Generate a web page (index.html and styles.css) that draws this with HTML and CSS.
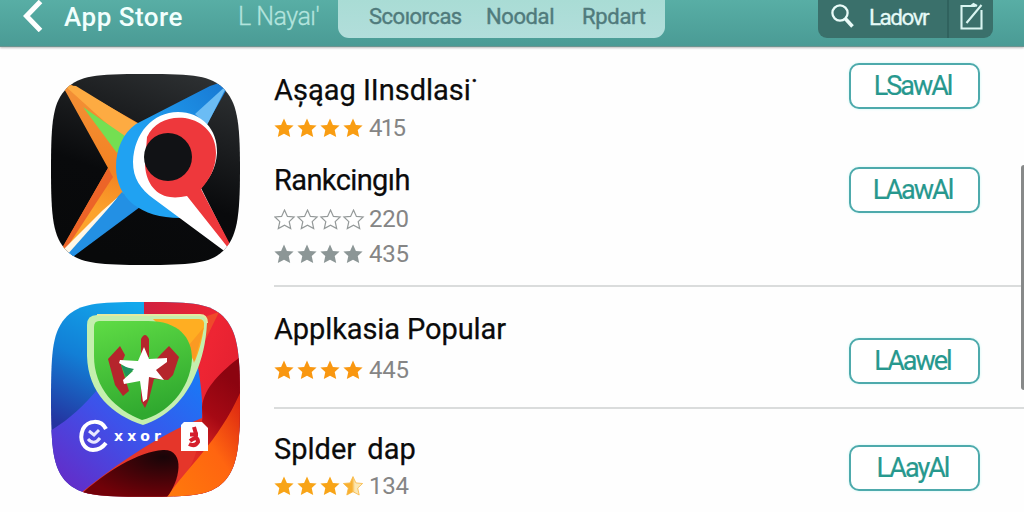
FILE: index.html
```html
<!DOCTYPE html>
<html lang="id">
<head>
<meta charset="utf-8">
<title>App Store</title>
<link rel="stylesheet" href="styles.css">
</head>
<body>
<svg class="defs" width="0" height="0" aria-hidden="true">
  <defs>
    <linearGradient id="half"><stop offset=".45" stop-color="#f8b030"/><stop offset=".6" stop-color="#fbe7b4"/></linearGradient>
    <path id="star" d="M10 .6 12.900 6.900 19.600 7.500 14.700 12.100 16.200 19 10 15.700 3.800 19 5.300 12.100 .4 7.500 7.100 6.900Z"/>
    <g id="stars"><use href="#star"/><use href="#star" x="23"/><use href="#star" x="46"/><use href="#star" x="69"/></g>
  </defs>
</svg>
<header class="bar">
  <svg class="back" width="20" height="32" viewBox="0 0 20 32"><path d="M17.500 1.500 3.500 16 17.500 30.500" fill="none" stroke="#fff" stroke-width="5"/></svg>
  <span class="brand">App Store</span>
  <span class="crumb">L Nayaı'</span>
  <nav class="tabs"><span class="tab tab-a">Scoıorcas</span><span class="tab tab-b">Noodal</span><span class="tab tab-c">Rpdart</span></nav>
  <div class="tools">
    <div class="search">
      <svg width="25" height="26" viewBox="0 0 25 26"><circle cx="10" cy="10" r="7.600" fill="none" stroke="#e9fbf8" stroke-width="2.300"/><path d="M15.200 15.500 22.500 23.500" stroke="#e9fbf8" stroke-width="3.600"/></svg>
      <span class="search-text">Ladovr</span>
    </div>
    <div class="compose"><svg width="26" height="31" viewBox="0 0 26 31"><path d="M16.500 6H2.500V28.500H22.500V10M7.500 23 22.500 5M12 6 14.500 4 18 6" fill="none" stroke="#d9f5f1" stroke-width="2.100"/></svg></div>
  </div>
</header>
<main class="store">
  <div class="icons">
    <svg class="icon" width="190" height="192" viewBox="0 0 190 192">
      <defs>
        <linearGradient id="dark" x1=".75" y1="0" x2=".4" y2="1"><stop stop-color="#2d3032"/><stop offset=".6" stop-color="#090a0c"/><stop offset="1" stop-color="#08090a"/></linearGradient>
        <linearGradient id="org" x1=".5" y1="0" x2=".4" y2="1"><stop stop-color="#f3923a"/><stop offset=".5" stop-color="#f38222"/><stop offset=".75" stop-color="#fca32c"/><stop offset="1" stop-color="#fda529"/></linearGradient>
        <linearGradient id="blu" x1="1" y1="0" x2="0" y2="1"><stop stop-color="#1877d2"/><stop offset=".6" stop-color="#20a2f2"/></linearGradient>
        <clipPath id="clipA"><path id="squircle" d="M95 1C146 1 160 3 173 15C187 29 190 47 190 96C190 145 187 164 173 178C160 190 144 192 95 192C46 192 30 190 17 178C3 164 1 145 1 96C1 47 3 29 17 15C30 3 44 1 95 1Z"/></clipPath>
      </defs>
      <g clip-path="url(#clipA)">
        <rect width="190" height="192" fill="url(#dark)"/>
        <path d="M12 12 18 10 88 50 88 90 74 122 13 180 13 174 58 95Z" fill="url(#org)"/>
        <path d="M14 12 26 13 88 51 76 68Z" fill="#fdab42"/>
        <path d="M33 34 75 63 67 80Z" fill="#74df52"/>
        <path d="M58 95 12 175 16 176 63 104Z" fill="#ec6428"/>
        <path d="M15 183 72 119 90 134 20 186Z" fill="#2390e4"/>
        <path d="M13 177 52 138 68 124 19 184Z" fill="#fff7e6"/>
        <path d="M17 182 72 120 88 134 22 184Z" fill="#2390e4"/>
        <path d="M172 9 160 13 86 51C73 60 66 76 66 94C66 126 92 146 133 145L157 51 179 12Z" fill="url(#blu)"/>
        <path d="M178 11 145 41 157 52Z" fill="#6bbcf4"/>
        <path d="M128 39C151 39 168 56 167 80C166 96 159 106 151 115L180 173 177 180 104 126C90 116 83 105 83 89C84 60 103 39 128 39Z" fill="#fff"/>
        <path d="M97 64C104 49 119 43 135 45C154 48 166 62 166 80C166 96 159 107 151 116L181 173 179 176 137 123C131 124 126 125 120 124C104 122 95 107 95 90Z" fill="#ee383c"/>
        <circle cx="118" cy="84" r="24" fill="#111215"/>
      </g>
    </svg>
    <svg class="icon" width="190" height="196" viewBox="0 0 190 196">
      <defs>
        <clipPath id="clipB"><use href="#squircle" transform="scale(1 1.02)"/></clipPath>
        <linearGradient id="sky" x1=".4" y1="0" x2=".1" y2=".65"><stop stop-color="#12a8ec"/><stop offset=".5" stop-color="#127fd6"/><stop offset="1" stop-color="#2434a0"/></linearGradient>
        <linearGradient id="wave" x1="1" y1="0" x2="0" y2="1"><stop stop-color="#157df7"/><stop offset=".5" stop-color="#3d52ea"/><stop offset="1" stop-color="#6c24c1"/></linearGradient>
        <linearGradient id="red" x1="0" y1="0" x2="1" y2=".6"><stop stop-color="#cf2140"/><stop offset=".6" stop-color="#ee2533"/><stop offset="1" stop-color="#e01f30"/></linearGradient>
        <linearGradient id="fold" x1=".7" y1=".1" x2=".4" y2=".9"><stop stop-color="#8c0410"/><stop offset=".4" stop-color="#a60914"/><stop offset=".8" stop-color="#e02a24"/></linearGradient>
        <linearGradient id="fire" x1="0" y1="1" x2="1" y2="0"><stop stop-color="#ff7a0c"/><stop offset=".55" stop-color="#ff6510"/><stop offset="1" stop-color="#d92112"/></linearGradient>
        <linearGradient id="leaf" x1="0" y1="0" x2=".3" y2="1"><stop stop-color="#5fdc45"/><stop offset="1" stop-color="#30a92f"/></linearGradient>
        <radialGradient id="cave" cx=".85" cy=".15" r=".9"><stop stop-color="#180508"/><stop offset="1" stop-color="#720108"/></radialGradient>
      </defs>
      <g clip-path="url(#clipB)">
        <rect width="190" height="196" fill="url(#sky)"/>
        <path d="M94 0H190V196H94Z" fill="url(#red)"/>
        <path d="M157 15 169 11 152 46 148 68Z" fill="#ef4a2b"/>
        <path d="M0 130C20 118 34 104 48 88L148 66C151 84 153 100 152 118L120 160 33 196H0Z" fill="url(#wave)"/>
        <path d="M190 56C172 70 154 86 152 106C152 112 153 116 152 120L124 196H170L190 130Z" fill="url(#fold)"/>
        <path d="M26 196C62 166 98 142 133 125L152 117C150 150 140 175 118 196Z" fill="#e5362a"/>
        <path d="M117 196C134 170 169 140 190 92V196Z" fill="url(#fire)"/>
        <path d="M28 196C56 170 88 151 113 149C136 148 130 180 117 196Z" fill="url(#cave)"/>
        <path d="M47 14H150Q157 14 157 22C156 42 152 58 146 72C136 98 116 117 93 124C62 114 38 92 37 55V24Q37 14 47 14Z" fill="#c4efae"/>
        <path d="M103 18H149Q155 18 154 25C152 40 149 50 145 60Z" fill="#ffae22"/>
        <path d="M154 26 139 44 144 62Z" fill="#fb9a22"/>
        <path d="M49 20H98C128 20 142 36 142 58C140 90 116 113 92 119C66 109 44 88 44 55V26Q44 20 49 20Z" fill="url(#leaf)"/>
        <path d="M47 14H150Q157 14 157 22" fill="none" stroke="#e4eba1" stroke-width="2"/>
        <path d="M58 58 70 45 75 54 71 64 79 90 73 95 65 84ZM91 38Q95 30 99 38V56H91ZM111 53 119 45 129 56 123 74 118 79 104 78 99 98 95 107 91 100V76Z" fill="#b5252c"/>
        <path d="M71 64 84 67 76 76Z" fill="#21945c"/>
        <path d="M94 46 99 58 117 57 117 61 106 69 114 79 99 76 97 98 93 101 90 80 74 83 73 79 83 70 69 62 70 59 88 60Z" fill="#fff"/>
        <path d="M75 66 84 68 77 75Z" fill="#21945c"/>
        <path d="M56 128C51 118 38 119 33 128C28 140 35 149 43 149C49 149 53 146 56 142" fill="none" stroke="#fff" stroke-width="4"/>
        <path d="M39 130 44 134 49 129M38 138Q44 145 50 137" fill="none" stroke="#e8e7ff" stroke-width="3"/>
        <text x="64" y="140" textLength="47" class="logo-text">xxor</text>
        <path d="M134 121H152L158 127V150H131V124Z" fill="#fff"/>
        <path d="M144 126 146 133M140 133.500H148M140 140Q148 134 148 141Q145 146 139 143" fill="none" stroke="#d51e2b" stroke-width="4"/>
      </g>
    </svg>
  </div>
  <div class="list">
    <section class="group group-first">
      <article class="app app-one">
        <div class="info"><h2 class="title t1">Așąag IInsdlasi˙</h2>
          <div class="rating"><svg class="stars" width="90" height="20" fill="#f99d12"><use href="#stars"/></svg><span class="count count-tight">415</span></div></div>
        <button class="get">LSawAl</button>
      </article>
      <article class="app app-two">
        <div class="info"><h2 class="title t2">Rankcingıh</h2>
          <div class="rating"><svg class="stars outline" width="92" height="21" viewBox="-.5 -.5 92 21"><use href="#stars"/></svg><span class="count">220</span></div>
          <div class="rating rating-gray"><svg class="stars" width="90" height="20" fill="#8c9696"><use href="#stars"/></svg><span class="count">435</span></div></div>
        <button class="get">LAawAl</button>
      </article>
    </section>
    <section class="group group-second">
      <article class="app app-three">
        <div class="info"><h2 class="title t3">Applkasia Popular</h2>
          <div class="rating rating-wide"><svg class="stars" width="90" height="20" fill="#f99710"><use href="#stars"/></svg><span class="count">445</span></div></div>
        <button class="get get-e">LAawel</button>
      </article>
    </section>
    <section class="group group-third">
      <article class="app app-four">
        <div class="info"><h2 class="title t4">Splder dap</h2>
          <div class="rating"><svg class="stars" width="90" height="20" fill="#f8a417"><use href="#star"/><use href="#star" x="23"/><use href="#star" x="46"/><use href="#star" x="69" fill="url(#half)" stroke="#f8b640" stroke-width=".8"/></svg><span class="count">134</span></div></div>
        <button class="get">LAayAl</button>
      </article>
    </section>
  </div>
</main>
<div class="scroll-thumb"></div>
</body>
</html>
```
FILE: styles.css
```css
* { box-sizing: border-box; }
body { margin: 0; width: 1024px; height: 512px; overflow: hidden; background: #fefefe; font-family: Roboto, "Liberation Sans", sans-serif; }
.defs { position: absolute; }
svg { display: block; flex: none; }
.bar { display: flex; align-items: flex-start; height: 47px; padding-left: 23px; background: linear-gradient(#58aea5, #4a9b95); border-bottom: 1px solid #6c9490; box-shadow: 0 1px 2px #bbb; white-space: nowrap; }
.back { margin-right: 21px; }
.brand { width: 174px; padding-top: 1px; font-size: 26px; font-weight: 500; line-height: 32px; color: #f2fffd; letter-spacing: .5px; }
.crumb { width: 100px; padding-top: 1px; font-size: 25px; font-weight: 300; line-height: 32px; color: #b3e4dd; letter-spacing: -.5px; -webkit-text-stroke: .3px #b3e4dd; }
.tabs { display: flex; width: 327px; height: 38px; padding-left: 31px; border-radius: 0 0 11px 11px; background: linear-gradient(#a9dcd5, #b2dedb); color: #507b7c; font-size: 22px; line-height: 33px; -webkit-text-stroke: .4px #507b7c; }
.tab-a { width: 117px; letter-spacing: -.5px; }
.tab-b { width: 96px; letter-spacing: -.4px; }
.tab-c { letter-spacing: -.3px; }
.tools { display: flex; width: 175px; height: 38px; margin-left: 153px; border-radius: 0 0 9px 9px; background: #3a706b; }
.search { display: flex; width: 131px; padding: 3px 0 0 12px; gap: 14px; border-right: 2px solid #30625e; }
.search-text { color: #e5faf7; font-size: 22.500px; line-height: 29px; letter-spacing: -1.500px; -webkit-text-stroke: .3px #e5faf7; }
.compose { padding-left: 10px; }
.store { display: flex; height: 465px; }
.icons { display: flex; flex-direction: column; gap: 36px; width: 274px; padding: 26px 0 0 50px; }
.list { width: 750px; }
.group + .group { border-top: 2px solid #dadcdc; }
.group-first { height: 238px; padding-top: 16px; }
.group-second { height: 122px; padding-top: 28px; }
.group-third { padding-top: 25px; }
.app { display: flex; align-items: flex-start; }
.app-one { height: 104px; }
.info { width: 575px; }
.title { margin: 0; padding-top: 11px; font-weight: 400; font-size: 29px; line-height: 32px; color: #0b0b0b; white-space: nowrap; -webkit-text-stroke: .25px #0b0b0b; }
.t2 { letter-spacing: -.6px; }
.t3 { letter-spacing: -.1px; }
.t4 { word-spacing: 4px; }
.app-two .title { padding-top: 0; margin-top: -3px; }
.app-three .title { padding-top: 0; margin-top: -2px; }
.app-four .title { padding-top: 0; margin-top: -1px; }
.rating { display: flex; align-items: center; margin-top: 11px; height: 24px; gap: 5px; }
.app-one .rating { margin-top: 10px; }
.rating-gray { margin-top: 11px; }
.rating-wide { margin-top: 13px; }
.app-four .rating { margin-top: 9px; }
.count { color: #858585; font-size: 24px; font-weight: 400; line-height: 24px; letter-spacing: -.2px; }
.count-tight { letter-spacing: -1.800px; }
.outline { fill: #fff; stroke: #949999; stroke-width: 1.200; margin-right: -2px; }
.get { width: 131px; height: 46px; padding: 0 4px 0 0; border: 2px solid #4eaaac; border-radius: 10px; background: #fff; color: #27988e; font-family: inherit; font-size: 27px; line-height: 42px; letter-spacing: -2px; box-shadow: 0 0 3px #cff8f5; -webkit-text-stroke: .2px #27988e; }
.app-three .get { margin-top: 23px; }
.app-four .get { margin-top: 11px; }
.logo-text { font: 700 14px "DejaVu Sans", sans-serif; fill: #fff; }
.scroll-thumb { position: fixed; right: 0; top: 165px; width: 3px; height: 225px; border-radius: 3px 0 0 3px; background: #878989; }
```
